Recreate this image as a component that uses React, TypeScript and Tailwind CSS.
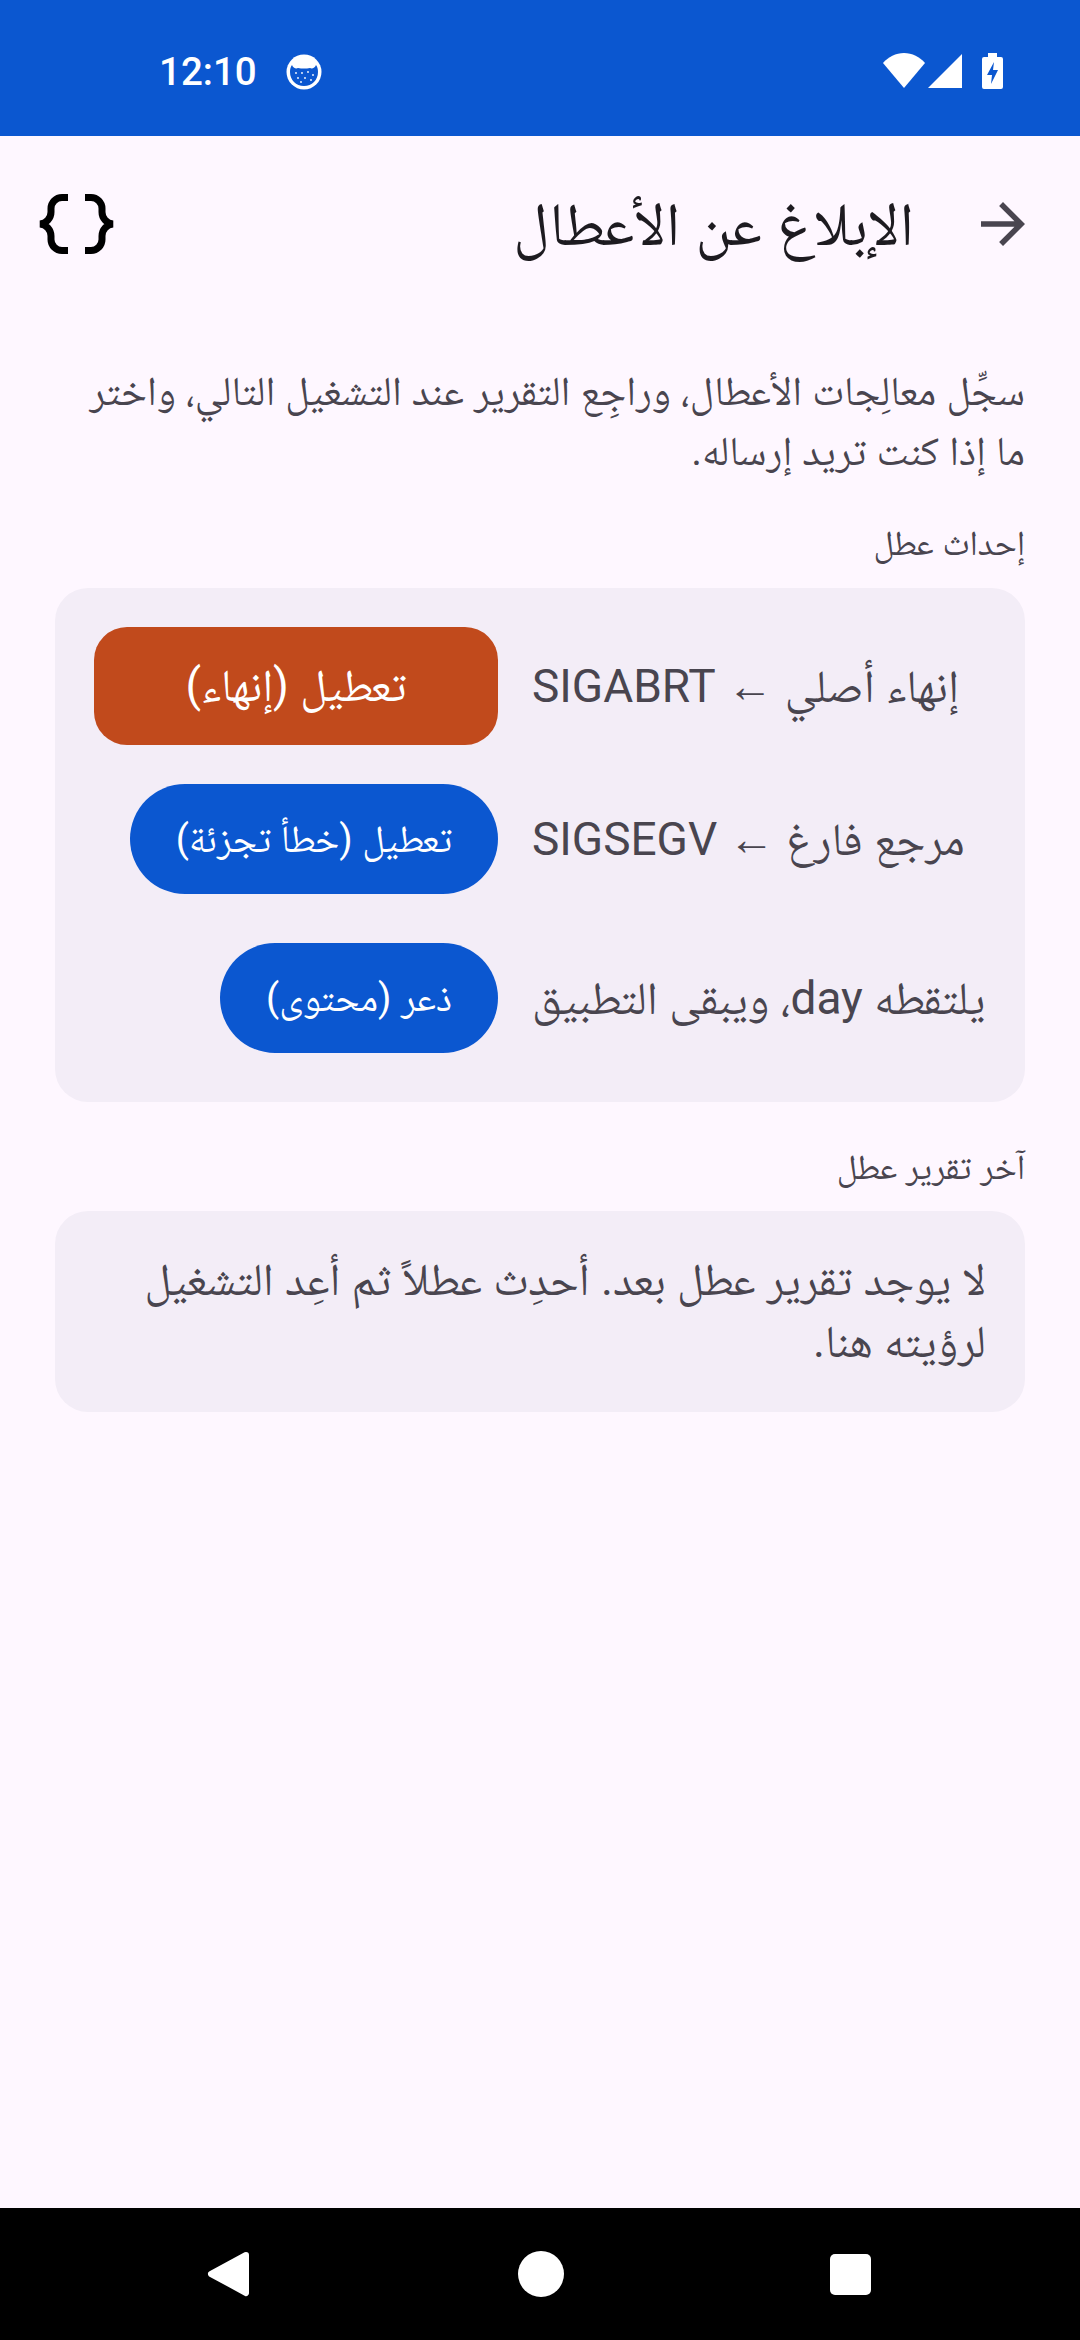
import React from "react";
import { MdArrowForward } from "react-icons/md";

function StatusBar() {
  return (
    <div dir="ltr" className="h-[136px] bg-[#0b57d0] flex items-center pl-[159px] pr-[77px] text-white">
      <span className="text-[38.500px] font-medium leading-none font-['Roboto',sans-serif] mt-[8px]">12:10</span>
      <svg width="36" height="36" viewBox="0 0 36 36" className="ml-[29px] mt-[8px]">
        <circle cx="18" cy="18" r="17.500" fill="#fff" />
        <path d="M4 18c0-3 .500-5 2-7 1 3 4 4 6 3 2 .500 4 .500 6 .500s4 0 6-.500c2 1 5 0 6-3 1.500 2 2 4 2 7 0 8-6 14-14 14S4 26 4 18z" fill="#0b57d0" />
        <g fill="#fff">
          <circle cx="10" cy="19" r=".9" /><circle cx="16" cy="19" r=".9" /><circle cx="22" cy="18" r=".9" /><circle cx="27" cy="21" r=".9" />
          <circle cx="12" cy="24" r=".9" /><circle cx="19" cy="24" r=".9" /><circle cx="25" cy="26" r=".9" /><circle cx="15" cy="28" r=".9" />
        </g>
      </svg>
      <div className="ml-auto flex items-center mt-[5px]">
        <svg width="42" height="36" viewBox="0 0 42 36"><path d="M0 10C5 4 13 0 21 0s16 4 21 10L21 35z" fill="#fff" /></svg>
        <svg width="34" height="36" viewBox="0 0 34 36" className="ml-[3px]"><path d="M34 1v34H0z" fill="#fff" /></svg>
        <svg width="21" height="36" viewBox="0 0 21 36" className="ml-[20px]">
          <path d="M6 0h9v4h4a2 2 0 0 1 2 2v28a2 2 0 0 1-2 2H2a2 2 0 0 1-2-2V6a2 2 0 0 1 2-2h4z" fill="#fff" />
          <path d="M12 9l-7 13h5l-1 9 7-14h-5z" fill="#0b57d0" />
        </svg>
      </div>
    </div>
  );
}

function NavBar() {
  return (
    <div dir="ltr" className="h-[132px] bg-black flex items-center text-white pl-[207px]">
      <svg width="44" height="46" viewBox="0 0 44 46">
        <path d="M39 4 L4 23 L39 42 Z" fill="#fff" stroke="#fff" strokeWidth="6" strokeLinejoin="round" />
      </svg>
      <div className="ml-[267px] w-[46px] h-[46px] rounded-full bg-white" />
      <div className="ml-[266px] w-[41px] h-[41px] rounded-[5px] bg-white" />
    </div>
  );
}

function Row({ label, button, color, rounded, w, h, className }: { label: string; button: string; color: string; rounded: string; w: string; h: string; className?: string }) {
  return (
    <div className={`flex items-center ${className ?? ""}`}>
      <span className="w-[454px] shrink-0 text-left text-[46px] leading-[60px] text-[#49454f] whitespace-nowrap">{label}</span>
      <div className={`mr-[34px] ${w} ${h} ${color} ${rounded} flex items-center justify-center text-white whitespace-nowrap`}>{button}</div>
    </div>
  );
}

export default function App() {
  return (
    <div dir="rtl" className="w-[1080px] h-[2340px] bg-[#fef7ff] flex flex-col font-['Roboto','Noto_Naskh_Arabic',sans-serif]">
      <StatusBar />
      <div className="flex-1 flex flex-col">
        <header className="h-[176px] flex items-center pr-[44px] pl-[34px] shrink-0">
          <MdArrowForward size={66} color="#49454f" />
          <h1 className="mr-[56px] text-[61px] leading-none text-[#1d1b20] font-normal">الإبلاغ عن الأعطال</h1>
          <svg width="88" height="88" viewBox="34 180 88 88" fill="none" stroke="#000" strokeWidth="7" className="mr-auto">
            <path d="M68 197.500H62a11 11 0 0 0-11 11V212a12 12 0 0 1-11 12 12 12 0 0 1 11 12v3.500a11 11 0 0 0 11 11h6" />
            <path d="M85 197.500H91a11 11 0 0 1 11 11V212a12 12 0 0 0 11 12 12 12 0 0 0-11 12v3.500a11 11 0 0 1-11 11h-6" />
          </svg>
        </header>
        <div className="px-[55px] flex flex-col pt-[49px]">
          <p className="pl-[20px] text-[41px] leading-[60px] text-[#49454f]">سجِّل معالِجات الأعطال، وراجِع التقرير عند التشغيل التالي، واختر ما إذا كنت تريد إرساله.</p>
          <h2 className="mt-[41px] text-[35px] leading-[44px] font-normal text-[#49454f]">إحداث عطل</h2>
          <section className="mt-[22px] bg-[#f3edf7] rounded-[33px] pt-[39px] px-[39px] pb-[49px] flex flex-col">
            <Row label="إنهاء أصلي ← SIGABRT" button="تعطيل (إنهاء)" color="bg-[#c14a1c] text-[45.500px]" rounded="rounded-[33px]" w="w-[404px]" h="h-[118px]" />
            <Row className="mt-[39px]" label="مرجع فارغ ← SIGSEGV" button="تعطيل (خطأ تجزئة)" color="bg-[#0b57d0] text-[38.500px]" rounded="rounded-full" w="w-[368px]" h="h-[110px]" />
            <Row className="mt-[49px]" label="يلتقطه day، ويبقى التطبيق" button="ذعر (محتوى)" color="bg-[#0b57d0] text-[38.500px]" rounded="rounded-full" w="w-[278px]" h="h-[110px]" />
          </section>
          <h2 className="mt-[44px] text-[35px] leading-[44px] font-normal text-[#49454f]">آخر تقرير عطل</h2>
          <section className="mt-[21px] bg-[#f3edf7] rounded-[33px] px-[39px] pt-[38px] pb-[40px] text-[45.500px] leading-[61.500px] text-[#49454f]">
            لا يوجد تقرير عطل بعد. أحدِث عطلاً ثم أعِد التشغيل لرؤيته هنا.
          </section>
        </div>
      </div>
      <NavBar />
    </div>
  );
}
